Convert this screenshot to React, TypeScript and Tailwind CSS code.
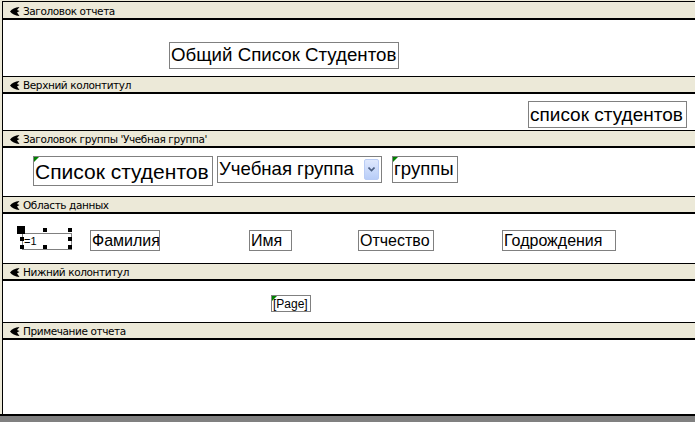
import type { ReactNode } from 'react';

const SectionArrow = () => (
  <svg width="10" height="9" viewBox="0 0 10 9" className="shrink-0">
    <path d="M0 4.5 C2 2 5 0.5 9.5 0 L7 3 L9.5 4 L7 5.5 L9.5 9 C5 8.5 2 7 0 4.5 Z" fill="#000" />
  </svg>
);

const Bar = ({ title, first }: { title: string; first?: boolean }) => (
  <div
    className={`flex items-center gap-[3px] pl-[7px] pt-[2px] bg-[#ece9d8] border-b-2 border-black ${
      first ? 'h-[19px] border-t border-[#aca899]' : 'h-[18px] border-t border-[#f7f6f0]'
    }`}
  >
    <SectionArrow />
    <span className="text-[10.5px] tracking-[-0.4px] leading-none text-black font-['DejaVu_Sans',sans-serif]">{title}</span>
  </div>
);

const Corner = () => (
  <span className="absolute left-0 top-0 w-0 h-0 border-t-[5px] border-r-[5px] border-t-[#008000] border-r-transparent" />
);

interface LabelProps {
  left: number;
  top: number;
  w: number;
  h: number;
  size: string;
  text: string;
  flag?: boolean;
}

const Label = ({ left, top, w, h, size, text, flag }: LabelProps) => (
  <div
    className={`absolute border border-[#808080] bg-white flex items-center pl-px leading-none text-black whitespace-nowrap overflow-hidden ${size}`}
    style={{ left, top, width: w, height: h }}
  >
    {flag && <Corner />}
    {text}
  </div>
);

const Section = ({ h, children }: { h: string; children?: ReactNode }) => (
  <div className={`relative bg-white ${h}`}>{children}</div>
);

const Handle = ({ x, y, big }: { x: number; y: number; big?: boolean }) => (
  <span
    className={`absolute bg-black ${big ? 'w-[8px] h-[8px]' : 'w-[4px] h-[4px]'}`}
    style={{ left: x - 3, top: y - 215 }}
  />
);

export default function App() {
  return (
    <div className="w-[695px] h-[422px] bg-[#ece9d8] pt-px overflow-hidden flex flex-col font-['Liberation_Sans',Arial,sans-serif]">
      <div className="ml-[2px] border-l border-black flex flex-col">
        <Bar title="Заголовок отчета" first />
        <Section h="h-[56px]">
          <Label left={166} top={22} w={230} h={27} size="text-[18.7px]" text="Общий Список Студентов" />
        </Section>

        <Bar title="Верхний колонтитул" />
        <Section h="h-[36px]">
          <Label left={525} top={7} w={159} h={27} size="text-[19px]" text="список студентов" />
        </Section>

        <Bar title="Заголовок группы 'Учебная группа'" />
        <Section h="h-[48px]">
          <Label left={30} top={8} w={180} h={30} size="text-[21px]" text="Список студентов" flag />
          <div className="absolute left-[214px] top-[8px] w-[165px] h-[27px] border border-[#808080] bg-white flex items-center pl-px pr-[2px] text-[18.6px] leading-none text-black">
            <span className="flex-1 whitespace-nowrap">Учебная группа</span>
            <span className="w-[15px] h-[21px] rounded-[2px] border border-[#b9ccf5] bg-gradient-to-b from-[#dfe8fd] to-[#b8cdf8] flex items-center justify-center">
              <svg width="7" height="5" viewBox="0 0 7 5">
                <path d="M0.5 0.5 L3.5 3.5 L6.5 0.5" stroke="#4d6185" strokeWidth="1.6" fill="none" />
              </svg>
            </span>
          </div>
          <Label left={389} top={8} w={66} h={27} size="text-[18.6px]" text="группы" flag />
        </Section>

        <Bar title="Область данных" />
        <Section h="h-[49px]">
          <div className="absolute left-[19px] top-[19px] w-[50px] h-[17px] border border-[#808080] bg-white flex items-center pl-px text-[11px] leading-none text-black">
            =1
          </div>
          <Handle x={17} y={227} big />
          <Handle x={43} y={229} />
          <Handle x={68} y={229} />
          <Handle x={20} y={238} />
          <Handle x={68} y={238} />
          <Handle x={20} y={246} />
          <Handle x={43} y={246} />
          <Handle x={68} y={246} />
          <Label left={87} top={16} w={70} h={21} size="text-[16px]" text="Фамилия" />
          <Label left={246} top={16} w={43} h={21} size="text-[16px]" text="Имя" />
          <Label left={355} top={16} w={76} h={21} size="text-[16px]" text="Отчество" />
          <Label left={499} top={16} w={114} h={21} size="text-[16px]" text="Годрождения" />
        </Section>

        <Bar title="Нижний колонтитул" />
        <Section h="h-[41px]">
          <Label left={268} top={14} w={40} h={17} size="text-[12px]" text="[Page]" flag />
        </Section>

        <Bar title="Примечание отчета" />
        <Section h="h-[74px]" />
      </div>
      <div className="h-[2px] bg-black" />
      <div className="flex-1 bg-[#808080]" />
    </div>
  );
}
